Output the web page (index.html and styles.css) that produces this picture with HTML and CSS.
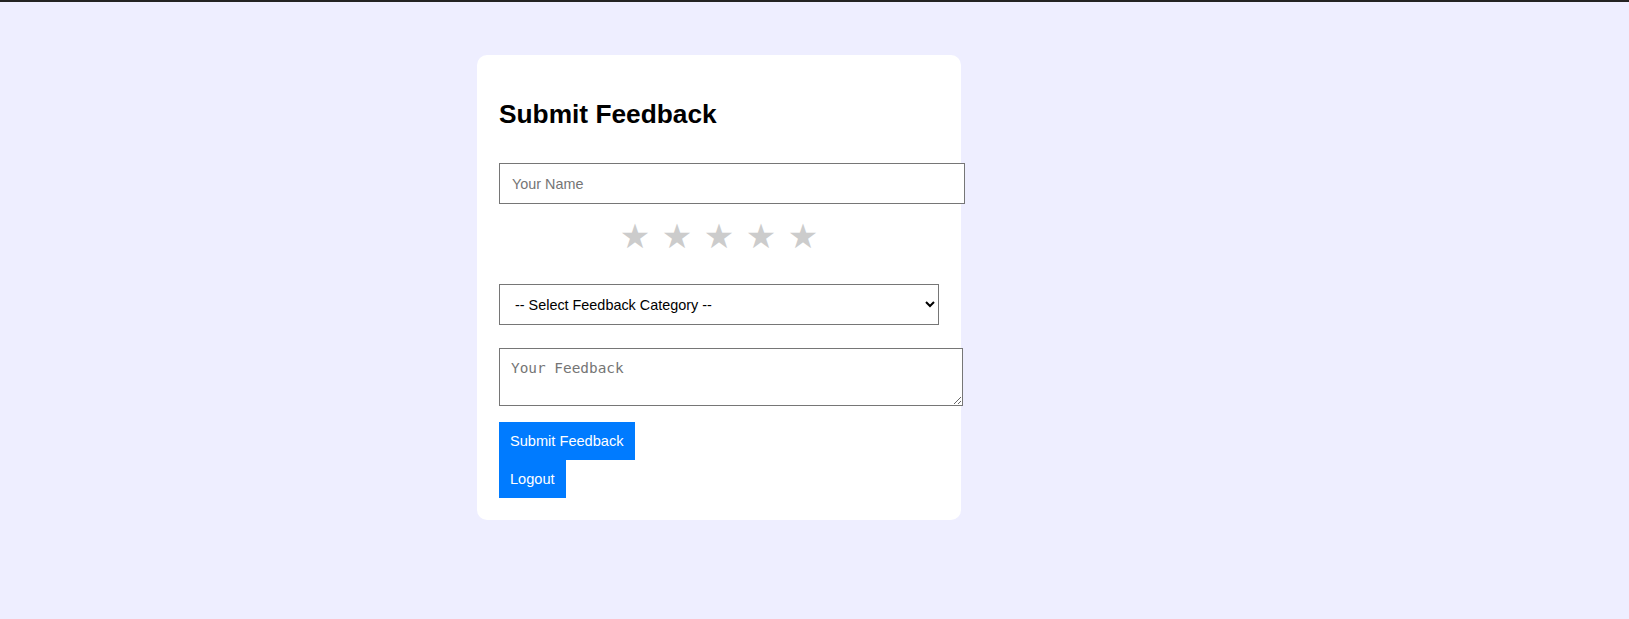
FILE: index.html
```html
<!DOCTYPE html>
<html lang="en">
<head>
<meta charset="utf-8">
<title>Submit Feedback</title>
<link rel="stylesheet" href="styles.css">
</head>
<body>
<div class="topbar"></div>
<main class="page">
  <form class="card">
    <h2 class="title">Submit Feedback</h2>
    <input class="field name" type="text" placeholder="Your Name">
    <div class="stars">
      <span class="star">★</span>
      <span class="star">★</span>
      <span class="star">★</span>
      <span class="star">★</span>
      <span class="star">★</span>
    </div>
    <select class="field category">
      <option>-- Select Feedback Category --</option>
      <option>Bug Report</option>
      <option>Feature Request</option>
      <option>General</option>
    </select>
    <textarea class="field feedback" placeholder="Your Feedback"></textarea>
    <button type="button" class="btn">Submit Feedback</button>
    <button type="button" class="btn">Logout</button>
  </form>
</main>
</body>
</html>
```
FILE: styles.css
```css
html, body {
  margin: 0;
  padding: 0;
}
body {
  background: #eeeeff;
  font-family: "Liberation Sans", Arial, sans-serif;
  min-height: 619px;
}
.topbar {
  height: 2px;
  background: #232323;
}
.page {
  padding-top: 53px;
  padding-left: 477px;
}
.card {
  width: 440px;
  padding: 22px 22px 22px;
  background: #ffffff;
  border-radius: 10px;
  display: flex;
  flex-direction: column;
  align-items: flex-start;
}
.title {
  margin: 23px 0 34px;
  font-size: 26.3px;
  line-height: 29px;
  font-weight: bold;
  color: #000;
}
.field {
  box-sizing: border-box;
  border: 1px solid #767676;
  border-radius: 0;
  font-family: "Liberation Sans", Arial, sans-serif;
  font-size: 14.4px;
  color: #000;
  background: #fff;
  margin: 0;
}
.field::placeholder {
  color: #757575;
}
.name {
  width: 466px;
  height: 41px;
  padding: 0 12px;
}
.stars {
  align-self: stretch;
  display: flex;
  justify-content: center;
  gap: 11.5px;
  margin-top: 8px;
  height: 72px;
  font-family: "DejaVu Sans", sans-serif;
  font-size: 34px;
  line-height: 48px;
  color: #cccccc;
}
.star {
  display: block;
}
.category {
  width: 440px;
  height: 41px;
  padding: 0 11px;
}
.feedback {
  width: 464px;
  height: 58px;
  margin-top: 23px;
  padding: 11px;
  font-family: "DejaVu Sans Mono", monospace;
  font-size: 14.4px;
  line-height: 17px;
  resize: both;
  display: block;
}
.btn {
  margin: 16px 0 0;
  border: none;
  border-radius: 0;
  background: #007bff;
  color: #ffffff;
  font-family: "Liberation Sans", Arial, sans-serif;
  font-size: 14.6px;
  line-height: 16px;
  padding: 11px 11px;
  cursor: pointer;
}
.btn + .btn {
  margin-top: 0;
}
```
